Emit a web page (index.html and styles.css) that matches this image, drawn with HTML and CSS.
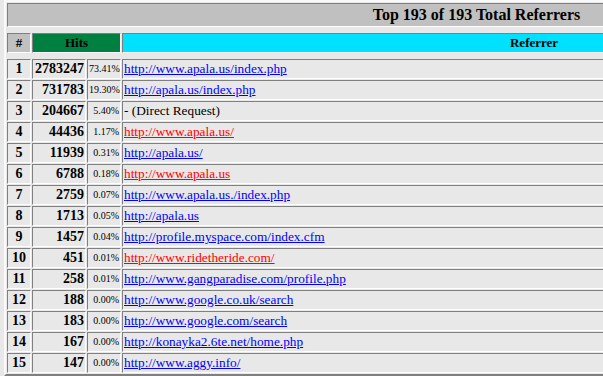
FILE: index.html
```html
<!DOCTYPE html>
<html>
<head>
<meta charset="utf-8">
<title>Top Referrers</title>
<link rel="stylesheet" href="styles.css">
</head>
<body>
<table class="refs">
  <colgroup>
    <col class="c-rank">
    <col class="c-hits">
    <col class="c-pct">
    <col class="c-ref">
  </colgroup>
  <tr class="title-row"><th colspan="4" class="title">Top 193 of 193 Total Referrers</th></tr>
  <tr class="gap"><td colspan="4"></td></tr>
  <tr class="head-row">
    <th class="h-rank">#</th>
    <th class="h-hits" colspan="2">Hits</th>
    <th class="h-ref">Referrer</th>
  </tr>
  <tr class="gap"><td colspan="4"></td></tr>
  <tr><td class="rank">1</td><td class="num">2783247</td><td class="pct">73.41%</td><td class="ref"><a href="#">http://www.apala.us/index.php</a></td></tr>
  <tr><td class="rank">2</td><td class="num">731783</td><td class="pct">19.30%</td><td class="ref"><a href="#">http://apala.us/index.php</a></td></tr>
  <tr><td class="rank">3</td><td class="num">204667</td><td class="pct">5.40%</td><td class="ref">- (Direct Request)</td></tr>
  <tr><td class="rank">4</td><td class="num">44436</td><td class="pct">1.17%</td><td class="ref"><a class="visited" href="#">http://www.apala.us/</a></td></tr>
  <tr><td class="rank">5</td><td class="num">11939</td><td class="pct">0.31%</td><td class="ref"><a href="#">http://apala.us/</a></td></tr>
  <tr><td class="rank">6</td><td class="num">6788</td><td class="pct">0.18%</td><td class="ref"><a class="visited" href="#">http://www.apala.us</a></td></tr>
  <tr><td class="rank">7</td><td class="num">2759</td><td class="pct">0.07%</td><td class="ref"><a href="#">http://www.apala.us./index.php</a></td></tr>
  <tr><td class="rank">8</td><td class="num">1713</td><td class="pct">0.05%</td><td class="ref"><a href="#">http://apala.us</a></td></tr>
  <tr><td class="rank">9</td><td class="num">1457</td><td class="pct">0.04%</td><td class="ref"><a href="#">http://profile.myspace.com/index.cfm</a></td></tr>
  <tr><td class="rank">10</td><td class="num">451</td><td class="pct">0.01%</td><td class="ref"><a class="visited" href="#">http://www.ridetheride.com/</a></td></tr>
  <tr><td class="rank">11</td><td class="num">258</td><td class="pct">0.01%</td><td class="ref"><a href="#">http://www.gangparadise.com/profile.php</a></td></tr>
  <tr><td class="rank">12</td><td class="num">188</td><td class="pct">0.00%</td><td class="ref"><a href="#">http://www.google.co.uk/search</a></td></tr>
  <tr><td class="rank">13</td><td class="num">183</td><td class="pct">0.00%</td><td class="ref"><a href="#">http://www.google.com/search</a></td></tr>
  <tr><td class="rank">14</td><td class="num">167</td><td class="pct">0.00%</td><td class="ref"><a href="#">http://konayka2.6te.net/home.php</a></td></tr>
  <tr><td class="rank">15</td><td class="num">147</td><td class="pct">0.00%</td><td class="ref"><a href="#">http://www.aggy.info/</a></td></tr>
</table>
</body>
</html>
```

FILE: styles.css
```css
html, body {
  margin: 0;
  padding: 0;
  background: #e8e8e8;
  overflow: hidden;
}

body {
  font-family: "Liberation Serif", "Times New Roman", serif;
  color: #000;
}

.refs {
  margin-left: 4px;
  width: 945px;
  table-layout: fixed;
  border-collapse: separate;
  border-spacing: 1px;
  border: 2px solid;
  border-color: #fafafa #808080 #808080 #fafafa;
  background: #e8e8e8;
}

.c-rank { width: 24px; }
.c-hits { width: 54px; }
.c-pct { width: 34px; }
.c-ref { width: 824px; }

.refs th,
.refs td {
  padding: 1px;
  border: 1px solid;
  border-color: #808080 #ffffff #ffffff #808080;
  vertical-align: middle;
  white-space: nowrap;
  overflow: hidden;
}

.refs .gap td {
  border: 0;
  padding: 0;
  height: 4px;
  line-height: 0;
}

.title {
  background: #c0c0c0;
  font-size: 16px;
  font-weight: bold;
  line-height: 20px;
  text-align: center;
}

.head-row th {
  font-size: 13px;
  font-weight: bold;
  line-height: 16px;
  text-align: center;
}

.h-rank { background: #c0c0c0; }
.h-hits { background: #008040; }
.h-ref { background: #00e0ff; }

.refs td {
  line-height: 16px;
}

.rank {
  font-size: 14px;
  font-weight: bold;
  text-align: center;
}

.num {
  font-size: 14px;
  font-weight: bold;
  text-align: right;
}

.pct {
  font-size: 10px;
  text-align: right;
}

.ref {
  font-size: 13.3px;
  text-align: left;
}

.ref a {
  color: #0000ff;
  text-decoration: underline;
}

.ref a.visited {
  color: #ff0000;
}
```
